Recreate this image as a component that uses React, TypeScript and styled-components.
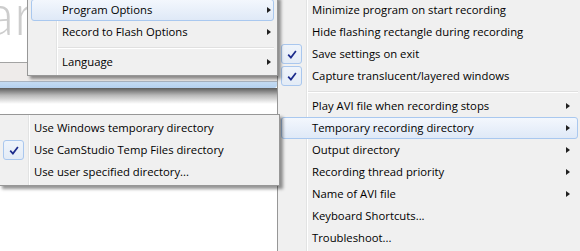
import React from 'react';
import styled, { createGlobalStyle, css } from 'styled-components';

const GlobalStyle = createGlobalStyle`
  html, body {
    margin: 0;
    padding: 0;
    background: #fff;
  }
  body {
    font-family: 'Open Sans', 'Noto Sans', sans-serif;
    font-size: 11.3px;
    color: #000;
  }
`;

const Screen = styled.div`
  position: relative;
  display: flex;
  width: 580px;
  height: 251px;
  overflow: hidden;
  background: #fff;
`;

/* the recorder window peeking out behind the menus */
const BackWindow = styled.div`
  flex: 0 0 277px;
  display: flex;
  flex-direction: column;
`;

const TitleArea = styled.div`
  height: 62px;
  border-bottom: 1px solid #a3a3a3;
  overflow: hidden;
`;

const BigTitle = styled.div`
  margin: -16px 0 0 -14px;
  font-family: Lato, 'Open Sans', sans-serif;
  font-weight: 300;
  font-size: 58px;
  line-height: 1;
  color: #cdcdcd;
  white-space: nowrap;
`;

const ToolStrip = styled.div`
  height: 18px;
  background: #eeebea;
  border-bottom: 1px solid #a9b3c0;
`;

const FrameEdge = styled.div`
  height: 6px;
  background: linear-gradient(to bottom, #c4dbf3, #b5d0ee);
  border-bottom-right-radius: 3px;
`;

const FrameShadow = styled.div`
  height: 16px;
  background: linear-gradient(to bottom, #5c5c5c, #b8b8b8 45%, #fff);
`;

const MenuPanel = styled.div<{ $width: number }>`
  box-sizing: border-box;
  width: ${(p) => p.$width}px;
  padding: 2px 3px;
  border: 1px solid #979797;
  background: linear-gradient(
      to right,
      transparent 28px,
      #e2e3e3 28px,
      #e2e3e3 29px,
      #fff 29px,
      #fff 30px,
      transparent 30px
    )
    #f0f0f0;
`;

const SideMenu = styled(MenuPanel)`
  flex: 0 0 auto;
  align-self: flex-start;
  margin-top: -4px;
`;

const PopupMenu = styled(MenuPanel)<{ $left: number; $top: number }>`
  position: absolute;
  left: ${(p) => p.$left}px;
  top: ${(p) => p.$top}px;
  box-shadow: 3px 3px 3px rgba(0, 0, 0, 0.42);
  z-index: 2;
`;

const Row = styled.div<{ $hot?: boolean }>`
  box-sizing: border-box;
  height: 22px;
  display: flex;
  align-items: center;
  border: 1px solid transparent;
  border-radius: 3px;
  ${(p) =>
    p.$hot &&
    css`
      border-color: #a9c8ef;
      background: linear-gradient(to bottom, #f3f7fd, #dfe9f7);
    `}
`;

const CheckCell = styled.div`
  flex: 0 0 27px;
  height: 100%;
  display: flex;
  align-items: center;
`;

const CheckBox = styled.div`
  box-sizing: border-box;
  width: 21px;
  height: 20px;
  margin-left: -1px;
  display: flex;
  align-items: center;
  justify-content: center;
  border: 1px solid #a9c7ee;
  border-radius: 3px;
  background: linear-gradient(to bottom, #eff4fb, #e3ebf6);
`;

const Label = styled.span`
  flex: 1;
  padding-left: 3px;
  white-space: nowrap;
  line-height: 20px;
`;

const SubArrow = styled.span<{ $inset: number }>`
  width: 0;
  height: 0;
  margin-right: ${(p) => p.$inset}px;
  border-left: 4px solid #202020;
  border-top: 3.5px solid transparent;
  border-bottom: 3.5px solid transparent;
`;

const Separator = styled.div`
  box-sizing: border-box;
  height: 8px;
  padding: 4px 0 0 27px;

  &::after {
    content: '';
    display: block;
    height: 1px;
    background: #e0e0e0;
    border-bottom: 1px solid #fff;
  }
`;

type Item = { label: string; sub?: boolean; checked?: boolean; hot?: boolean } | 'sep';

const mainItems: Item[] = [
  { label: 'Program Options', sub: true, hot: true },
  { label: 'Record to Flash Options', sub: true },
  'sep',
  { label: 'Language', sub: true },
];

const optionItems: Item[] = [
  { label: 'Minimize program on start recording' },
  { label: 'Hide flashing rectangle during recording' },
  { label: 'Save settings on exit', checked: true },
  { label: 'Capture translucent/layered windows', checked: true },
  'sep',
  { label: 'Play AVI file when recording stops', sub: true },
  { label: 'Temporary recording directory', sub: true, hot: true },
  { label: 'Output directory', sub: true },
  { label: 'Recording thread priority', sub: true },
  { label: 'Name of AVI file', sub: true },
  { label: 'Keyboard Shortcuts...' },
  { label: 'Troubleshoot...' },
];

const tempItems: Item[] = [
  { label: 'Use Windows temporary directory' },
  { label: 'Use CamStudio Temp Files directory', checked: true },
  { label: 'Use user specified directory...' },
];

const CheckMark = () => (
  <svg width="10" height="9" viewBox="0 0 10 9">
    <path d="M1.2 4.6 L3.9 7.6 L8.9 0.9" fill="none" stroke="#1b2b8c" strokeWidth="1.7" />
  </svg>
);

const MenuRows = ({ items, arrowInset }: { items: Item[]; arrowInset: number }) => (
  <>
    {items.map((item, i) =>
      item === 'sep' ? (
        <Separator key={i} />
      ) : (
        <Row key={i} $hot={item.hot}>
          <CheckCell>
            {item.checked && (
              <CheckBox>
                <CheckMark />
              </CheckBox>
            )}
          </CheckCell>
          <Label>{item.label}</Label>
          {item.sub && <SubArrow $inset={arrowInset} />}
        </Row>
      ),
    )}
  </>
);

export default function App() {
  return (
    <Screen>
      <GlobalStyle />
      <BackWindow>
        <TitleArea>
          <BigTitle>ar</BigTitle>
        </TitleArea>
        <ToolStrip />
        <FrameEdge />
        <FrameShadow />
      </BackWindow>

      <SideMenu $width={305}>
        <MenuRows items={optionItems} arrowInset={7} />
      </SideMenu>

      <PopupMenu $width={251} $left={27} $top={-4}>
        <MenuRows items={mainItems} arrowInset={2} />
      </PopupMenu>

      <PopupMenu $width={281} $left={-1} $top={114}>
        <MenuRows items={tempItems} arrowInset={2} />
      </PopupMenu>
    </Screen>
  );
}
